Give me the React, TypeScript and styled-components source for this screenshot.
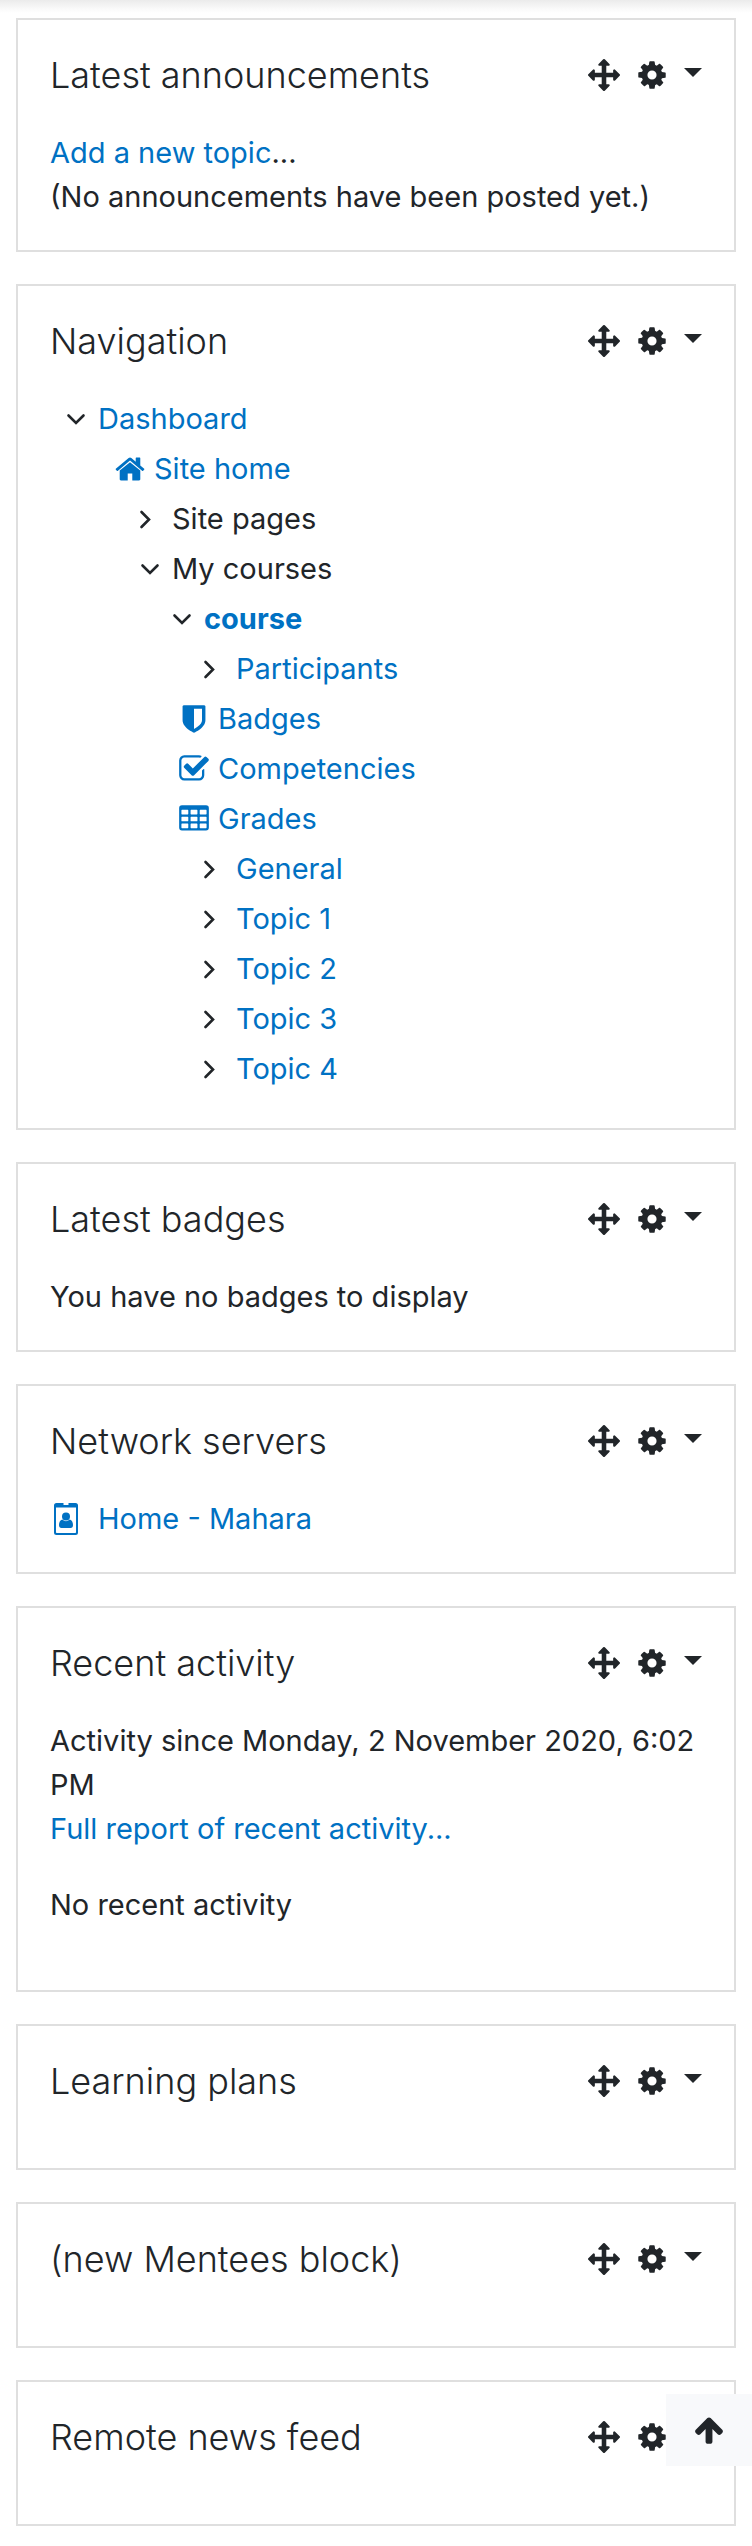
import React from 'react';
import styled, { createGlobalStyle, css } from 'styled-components';

const INK = '#212529';
const LINK = '#0071c3';

const GlobalStyle = createGlobalStyle`
  *, *::before, *::after { box-sizing: border-box; }
  body {
    margin: 0;
    background: #fff;
    color: ${INK};
    font-family: Inter, "Liberation Sans", sans-serif;
    font-size: 29px;
    line-height: 44px;
  }
  ul { list-style: none; margin: 0; padding: 0; }
  p { margin: 0; }
`;

const Page = styled.div`
  position: relative;
`;

const NavbarShadow = styled.div`
  height: 18px;
  background: linear-gradient(#ebebeb, #fafafa 9px, #fff 13px);
`;

const Blocks = styled.main`
  display: flex;
  flex-direction: column;
  gap: 32px;
  padding: 0 16px 20px;
`;

const Card = styled.section`
  padding: 32px 32px 31px;
  border: 2px solid #dfdfdf;
  background: #fff;
`;

const CardHeader = styled.header`
  display: flex;
  align-items: center;
  justify-content: space-between;
  margin-bottom: 33px;
`;

const CardTitle = styled.h2`
  margin: 0;
  font-size: 36px;
  font-weight: 300;
  line-height: 46px;
`;

const CardActions = styled.div`
  display: flex;
  align-items: center;
  gap: 16px;
`;

const IconButton = styled.button`
  display: flex;
  align-items: center;
  gap: 16px;
  padding: 0;
  border: 0;
  background: none;
  color: inherit;
  cursor: pointer;
`;

const Caret = styled.span`
  margin-bottom: 6px;
  border: 9px solid transparent;
  border-top-color: currentColor;
  border-bottom: 0;
`;

const Link = styled.a<{ $current?: boolean }>`
  color: ${LINK};
  font-weight: ${(p) => (p.$current ? 700 : 400)};
  text-decoration: none;
  &:hover { text-decoration: underline; }
`;

const ServerLink = styled(Link)`
  display: flex;
  align-items: center;
  gap: 16px;
`;

const Paragraph = styled.p`
  margin: 32px 0;
`;

const Tree = styled.ul<{ $indent: number }>`
  padding-left: ${(p) => p.$indent}px;
`;

const Row = styled.div<{ $branch?: boolean }>`
  display: flex;
  align-items: center;
  gap: 8px;
  padding-bottom: 6px;
  ${(p) => p.$branch && css`padding-left: 18px;`}
`;

const LeafLink = styled(Link)`
  display: flex;
  align-items: center;
  gap: 8px;
`;

const BackToTop = styled.a`
  position: absolute;
  right: 0;
  bottom: 80px;
  display: flex;
  align-items: center;
  justify-content: center;
  width: 86px;
  height: 72px;
  background: #f8f9fb;
  color: ${INK};
`;

const Glyph = styled.svg`
  display: block;
  flex: none;
  width: 32px;
  height: 32px;
  fill: currentColor;
`;

const Chevron = styled(Glyph)`
  fill: none;
  stroke: ${INK};
  stroke-width: 2.6;
  stroke-linecap: round;
  stroke-linejoin: miter;
`;

const PATHS = {
  move: 'M1792 896q0 26-19 45l-256 256q-19 19-45 19t-45-19-19-45v-128h-384v384h128q26 0 45 19t19 45-19 45l-256 256q-19 19-45 19t-45-19l-256-256q-19-19-19-45t19-45 45-19h128v-384h-384v128q0 26-19 45t-45 19-45-19l-256-256q-19-19-19-45t19-45l256-256q19-19 45-19t45 19 19 45v128h384v-384h-128q-26 0-45-19t-19-45 19-45l256-256q19-19 45-19t45 19l256 256q19 19 19 45t-19 45-45 19h-128v384h384v-128q0-26 19-45t45-19 45 19l256 256q19 19 19 45z',
  cog: 'M1152 896q0-106-75-181t-181-75-181 75-75 181 75 181 181 75 181-75 75-181zm512-109v222q0 12-8 23t-20 13l-185 28q-19 54-39 91 35 50 107 138 10 12 10 25t-9 23q-27 37-99 108t-94 71q-12 0-26-9l-138-108q-44 23-91 38-16 136-29 186-7 28-36 28h-222q-14 0-24.5-8.5t-11.5-21.5l-28-184q-49-16-90-37l-141 107q-10 9-25 9-14 0-25-11-126-114-165-168-7-10-7-23 0-12 8-23 15-21 51-66.5t54-70.5q-27-50-41-99l-183-27q-13-2-21-12.5t-8-23.5v-222q0-12 8-23t19-13l186-28q14-46 39-92-40-57-107-138-10-12-10-24 0-10 9-23 26-36 98.5-107.5t94.5-71.5q13 0 26 10l138 107q44-23 91-38 16-136 29-186 7-28 36-28h222q14 0 24.5 8.5t11.5 21.5l28 184q49 16 90 37l142-107q9-9 24-9 13 0 25 10 129 119 165 170 7 8 7 22 0 12-8 23-15 21-51 66.5t-54 70.5q26 50 41 98l183 28q13 2 21 12.5t8 23.5z',
  home: 'M1472 992v480q0 26-19 45t-45 19h-384v-384h-256v384h-384q-26 0-45-19t-19-45v-480q0-1 .5-3t.5-3l575-474 575 474q1 2 1 6zm223-69l-62 74q-8 9-21 11h-3q-13 0-21-7l-692-577-692 577q-12 8-24 7-13-2-21-11l-62-74q-8-10-7-23.5t11-21.5l719-599q32-26 76-26t76 26l244 204v-195q0-14 9-23t23-9h192q14 0 23 9t9 23v408l219 182q10 8 11 21.5t-7 23.5z',
  shield: 'M1344 960v-640h-448v1137q119-63 213-137 235-184 235-360zm192-768v768q0 86-33.5 170.5t-83 150-118 127.5-126.5 103-121 77.5-89.5 49.5-42.5 20q-12 6-26 6t-26-6q-16-7-42.5-20t-89.5-49.5-121-77.5-126.5-103-118-127.5-83-150-33.5-170.5v-768q0-26 19-45t45-19h1152q26 0 45 19t19 45z',
  check: 'M1472 930v318q0 119-84.5 203.5t-203.5 84.5h-832q-119 0-203.5-84.5t-84.5-203.5v-832q0-119 84.5-203.5t203.5-84.5h832q63 0 117 25 15 7 18 23 3 17-9 29l-49 49q-10 10-23 10-3 0-9-2-23-6-45-6h-832q-66 0-113 47t-47 113v832q0 66 47 113t113 47h832q66 0 113-47t47-113v-254q0-13 9-22l64-64q10-10 23-10 6 0 12 3 20 8 20 29zm231-489l-814 814q-24 24-57 24t-57-24l-430-430q-24-24-24-57t24-57l110-110q24-24 57-24t57 24l263 263 647-647q24-24 57-24t57 24l110 110q24 24 24 57t-24 57z',
  table:
    'M224 128h1344a160 160 0 0 1 160 160v1088a160 160 0 0 1-160 160H224a160 160 0 0 1-160-160V288a160 160 0 0 1 160-160z' +
    [384, 768, 1152]
      .flatMap((y) => [192, 704, 1216].map((x) => `M${x + 32} ${y}q-32 0-32 32v192q0 32 32 32h320q32 0 32-32v-192q0-32-32-32z`))
      .join(''),
  up: 'M1675 971q0 51-37 90l-75 75q-38 38-91 38-54 0-90-38l-294-293v704q0 52-37.5 84.5t-90.5 32.5h-128q-53 0-90.5-32.5t-37.5-84.5v-704l-294 293q-36 38-90 38t-90-38l-75-75q-38-38-38-90 0-53 38-91l651-651q35-37 90-37 54 0 91 37l651 651q37 39 37 91z',
};

type IconName = keyof typeof PATHS;

const Icon = ({ name }: { name: IconName }) => (
  <Glyph viewBox="0 0 1792 1792" aria-hidden="true">
    <path fillRule="evenodd" d={PATHS[name]} />
  </Glyph>
);

const BadgeIcon = () => (
  <Glyph viewBox="0 0 32 32" aria-hidden="true">
    <path
      fillRule="evenodd"
      d="M6.500 0H13.500V2H18.500V0H25.500Q28 0 28 2.500V29.500Q28 32 25.500 32H6.500Q4 32 4 29.500V2.500Q4 0 6.500 0ZM6 4.500V29.300Q6 30 6.700 30H25.300Q26 30 26 29.300V4.500Z"
    />
    <circle cx="16" cy="13.500" r="4" />
    <path d="M12.300 16.500Q16 19.800 19.700 16.500C22 16.800 23 19.500 23 22Q23 25 20.500 25H11.500Q9 25 9 22C9 19.500 10 16.800 12.300 16.500Z" />
  </Glyph>
);

const Toggle = ({ open }: { open?: boolean }) => (
  <Chevron viewBox="0 0 32 32" aria-hidden="true">
    <path d={open ? 'M10.500 12.500L18 20L25.500 12.500' : 'M9.500 9L17 16.500L9.500 24'} />
  </Chevron>
);

const Block = ({ title, children }: { title: string; children?: React.ReactNode }) => (
  <Card>
    <CardHeader>
      <CardTitle>{title}</CardTitle>
      <CardActions>
        <IconButton type="button" aria-label={`Move ${title} block`}>
          <Icon name="move" />
        </IconButton>
        <IconButton type="button" aria-label={`Actions for ${title} block`}>
          <Icon name="cog" />
          <Caret />
        </IconButton>
      </CardActions>
    </CardHeader>
    {children}
  </Card>
);

type BranchProps = {
  label: string;
  link?: boolean;
  current?: boolean;
  open?: boolean;
  root?: boolean;
  children?: React.ReactNode;
};

const Branch = ({ label, link, current, open, root, children }: BranchProps) => (
  <li>
    <Row $branch={!root}>
      <Toggle open={open} />
      {link ? <Link href="#" $current={current}>{label}</Link> : <span>{label}</span>}
    </Row>
    {children}
  </li>
);

const Leaf = ({ icon, label }: { icon: IconName; label: string }) => (
  <li>
    <Row>
      <LeafLink href="#">
        <Icon name={icon} />
        {label}
      </LeafLink>
    </Row>
  </li>
);

const SECTIONS = ['General', 'Topic 1', 'Topic 2', 'Topic 3', 'Topic 4'];

const App = () => (
  <Page>
    <GlobalStyle />
    <NavbarShadow />
    <Blocks>
      <Block title="Latest announcements">
        <p><Link href="#">Add a new topic</Link>...</p>
        <p>(No announcements have been posted yet.)</p>
      </Block>

      <Block title="Navigation">
        <Tree $indent={8}>
          <Branch label="Dashboard" link open root>
            <Tree $indent={56}>
              <Leaf icon="home" label="Site home" />
              <Branch label="Site pages" />
              <Branch label="My courses" open>
                <Tree $indent={32}>
                  <Branch label="course" link current open>
                    <Tree $indent={32}>
                      <Branch label="Participants" link />
                      <Leaf icon="shield" label="Badges" />
                      <Leaf icon="check" label="Competencies" />
                      <Leaf icon="table" label="Grades" />
                      {SECTIONS.map((s) => <Branch key={s} label={s} link />)}
                    </Tree>
                  </Branch>
                </Tree>
              </Branch>
            </Tree>
          </Branch>
        </Tree>
      </Block>

      <Block title="Latest badges">
        <p>You have no badges to display</p>
      </Block>

      <Block title="Network servers">
        <ServerLink href="#"><BadgeIcon />Home - Mahara</ServerLink>
      </Block>

      <Block title="Recent activity">
        <p>Activity since Monday, 2 November 2020, 6:02 PM</p>
        <p><Link href="#">Full report of recent activity...</Link></p>
        <Paragraph>No recent activity</Paragraph>
      </Block>

      <Block title="Learning plans" />
      <Block title="(new Mentees block)" />
      <Block title="Remote news feed" />
    </Blocks>
    <BackToTop href="#" aria-label="Back to top"><Icon name="up" /></BackToTop>
  </Page>
);

export default App;
